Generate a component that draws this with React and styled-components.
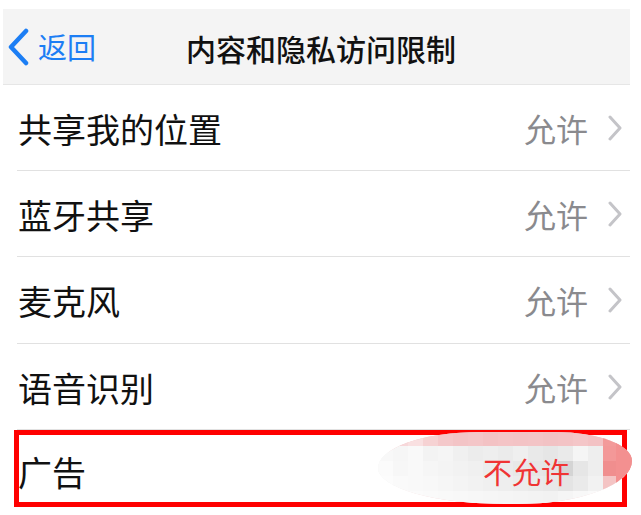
import React from "react";
import styled, { createGlobalStyle } from "styled-components";

const Global = createGlobalStyle`
  html, body { margin: 0; padding: 0; background: #ffffff; }
  body { font-family: "Noto Sans CJK SC", "Noto Sans", sans-serif; }
`;

const Page = styled.div`
  width: 641px;
  height: 515px;
  padding: 9px 11px 0 3px;
  box-sizing: border-box;
  overflow: hidden;
  background: #fff;
`;

const NavBar = styled.header`
  height: 76px;
  background: #f4f4f4;
  border-bottom: 1px solid #e6e6e6;
  box-sizing: border-box;
  display: flex;
  align-items: center;
  padding-left: 4px;
  gap: 90px;
`;

const Back = styled.div`
  display: flex;
  align-items: center;
  gap: 9px;
  color: #1c7ef4;
  font-size: 29px;
  line-height: 1;
`;

const Title = styled.h1`
  margin: 0;
  font-size: 30px;
  font-weight: 500;
  color: #111;
  line-height: 1;
  padding-top: 2px;
`;

const List = styled.div`
  display: flex;
  flex-direction: column;
  padding-left: 11px;
`;

const Row = styled.div`
  position: relative;
  height: ${p => p.$h || 86}px;
  display: flex;
  align-items: center;
  box-sizing: border-box;
  margin-left: 3px;
  padding: 0 8px 0 0;
  border-bottom: 1px solid #e1e1e1;
`;

const FlaggedRow = styled.div`
  position: relative;
  height: 77px;
  display: flex;
  align-items: center;
  box-sizing: border-box;
  border: 5px solid #ff0000;
  padding: 4px 8px 0 0;
  width: 613px;
`;

const Label = styled.span`
  flex: 1;
  font-size: 34px;
  color: #111;
  line-height: 1;
  padding-top: 2px;
  margin-left: ${p => (p.$inset ? -1 : 1)}px;
`;

const Value = styled.span`
  font-size: 32px;
  color: #8a8a8e;
  line-height: 1;
  margin-right: 20px;
`;

const Smudge = styled.div`
  position: absolute;
  left: 359px;
  top: -3px;
  width: 254px;
  height: 72px;
  border-radius: 40% 30% 45% 50% / 50% 40% 60% 50%;
  background: linear-gradient(180deg, #f3bcbe 0%, #f4c2c4 22%, #f3f3f3 30%, #f1f1f1 75%, #f6c0c2 100%);
  overflow: hidden;
  display: grid;
  grid-template-columns: repeat(17, 15px);
  grid-template-rows: repeat(5, 15px);
  align-content: center;
`;

const Pixel = styled.div`
  background: ${p => p.$c};
`;

const EdgeTint = styled.div`
  position: absolute;
  right: 0;
  top: 10px;
  width: 16px;
  height: 56px;
  background: #f39090;
  border-radius: 0 40% 40% 0;
`;

const Denied = styled.span`
  position: absolute;
  left: 464px;
  top: 22px;
  font-size: 29px;
  color: #f03434;
  line-height: 1;
`;

const Chevron = () => (
  <svg width="14" height="26" viewBox="0 0 14 26">
    <path d="M2 2 L12 13 L2 24" fill="none" stroke="#c4c4c8" strokeWidth="3" strokeLinecap="round" strokeLinejoin="round" />
  </svg>
);

const BackChevron = () => (
  <svg width="22" height="38" viewBox="0 0 22 38">
    <path d="M19 3 L4 19 L19 35" fill="none" stroke="#1c7ef4" strokeWidth="4.5" strokeLinecap="round" strokeLinejoin="round" />
  </svg>
);

const rows = [
  { label: "共享我的位置", h: 86 },
  { label: "蓝牙共享", h: 86 },
  { label: "麦克风", h: 87 },
  { label: "语音识别", h: 86 },
];

const shades = [
  "#f5d0d2", "#f7d8da", "#f9e0e1", "#f6d2d3", "#f4c8ca", "#f3c4c6", "#f4c6c8", "#f3c2c4", "#f4c4c6", "#f3c3c5", "#f3c4c6", "#f2c2c4", "#f3c3c5", "#f4c6c8", "#f3c2c4", "#f39a9a", "#f39292",
  "#f8f8f8", "#f6f6f6", "#f9f9f9", "#f3f3f3", "#f5f5f5", "#f0f0f0", "#ececec", "#eeeeee", "#ebebeb", "#efefef", "#e9e9e9", "#e6e6e6", "#eaeaea", "#f5f5f5", "#eeeeee", "#f39898", "#f09292",
  "#fbfbfb", "#f7f7f7", "#f9f9f9", "#f6f6f6", "#f4f4f4", "#f2f2f2", "#f0f0f0", "#ececec", "#ebebeb", "#e8e8e8", "#e6e6e6", "#e4e4e4", "#d4d4d4", "#e6e6e6", "#eeeeee", "#f08e8e", "#ee8a8a",
  "#fcfcfc", "#fafafa", "#f9f9f9", "#f8f8f8", "#f6f6f6", "#f4f4f4", "#f2f2f2", "#f0f0f0", "#eeeeee", "#ececec", "#eaeaea", "#e8e8e8", "#e4e4e4", "#eaeaea", "#f2f2f2", "#f4c4c4", "#fff",
  "#fdfdfd", "#fcfcfc", "#fbfbfb", "#fafafa", "#f9f9f9", "#f8f8f8", "#f7f7f7", "#f6f6f6", "#f5f5f5", "#f4f4f4", "#f3f3f3", "#f2f2f2", "#f5f5f5", "#f8f8f8", "#fafafa", "#fff", "#fff",
];

export default function App() {
  return (
    <>
      <Global />
      <Page>
        <NavBar>
          <Back>
            <BackChevron />
            <span>返回</span>
          </Back>
          <Title>内容和隐私访问限制</Title>
        </NavBar>
        <List>
          {rows.map(r => (
            <Row key={r.label} $h={r.h}>
              <Label>{r.label}</Label>
              <Value>允许</Value>
              <Chevron />
            </Row>
          ))}
          <FlaggedRow>
            <Label $inset>广告</Label>
            <Smudge>
              {shades.map((c, i) => (
                <Pixel key={i} $c={c} />
              ))}
              <EdgeTint />
            </Smudge>
            <Denied>不允许</Denied>
          </FlaggedRow>
        </List>
      </Page>
    </>
  );
}
